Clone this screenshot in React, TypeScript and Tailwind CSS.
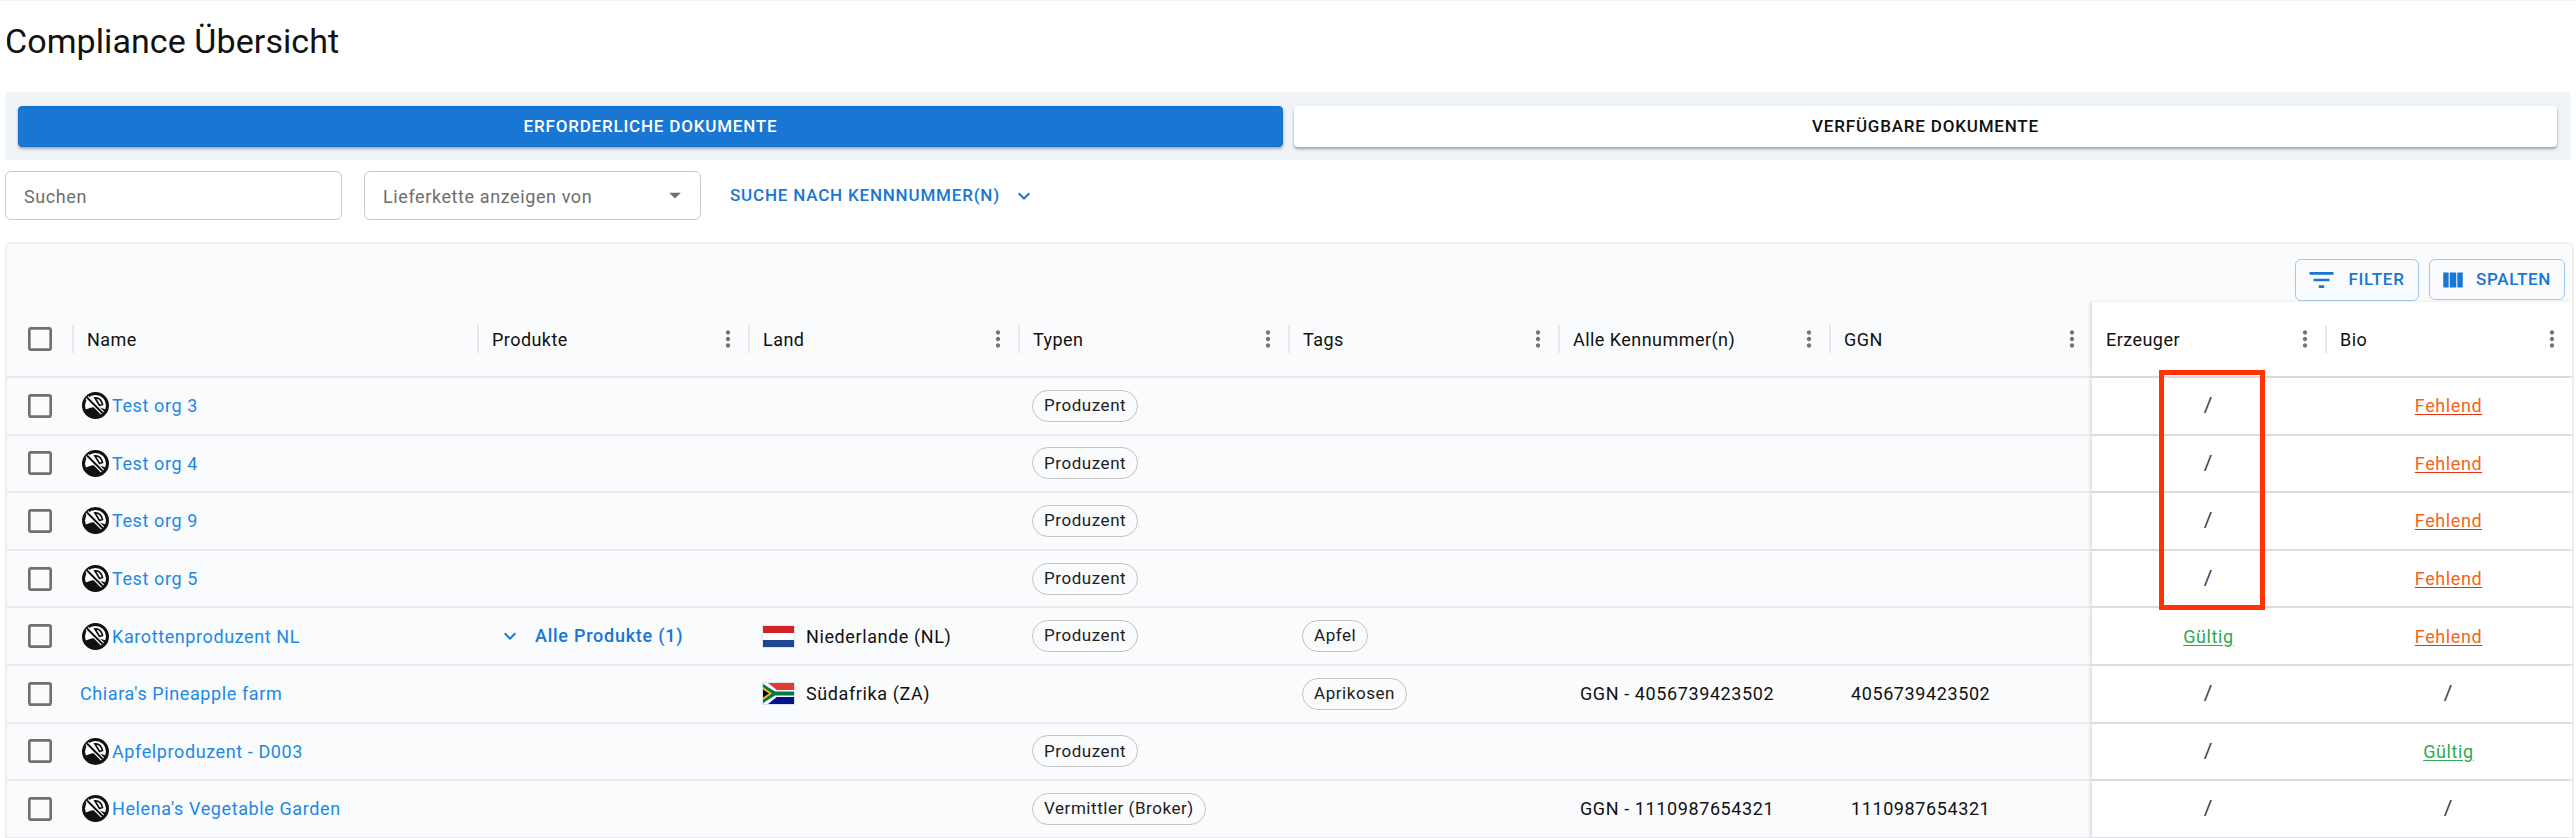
import React from "react";

function NoIcon() {
  return (
    <svg width="27" height="27" viewBox="0 0 27 27" className="shrink-0">
      <circle cx="13.5" cy="13.5" r="12" fill="#fff" stroke="#111" strokeWidth="3" />
      <path d="M3 17.5c3-.5 5-2 9.500-2.500s8 1.500 11.500 2.500c-1.500 4.500-5.500 8-10.500 8S4.500 22 3 17.500z" fill="#111" />
      <path d="M13 6c4-.5 7 2.500 7.500 6.500l-3 1z" fill="#fff" stroke="#111" strokeWidth="1.800" />
      <path d="M5 5.500L20.500 21" stroke="#fff" strokeWidth="4.500" />
      <path d="M5 5.500L20.500 21" stroke="#111" strokeWidth="2" />
    </svg>
  );
}

function Dots() {
  return (
    <svg width="26" height="26" viewBox="0 0 24 24" fill="#757575" className="shrink-0">
      <path d="M12 8c1.100 0 2-.9 2-2s-.9-2-2-2-2 .9-2 2 .9 2 2 2zm0 2c-1.100 0-2 .9-2 2s.9 2 2 2 2-.9 2-2-.9-2-2-2zm0 6c-1.100 0-2 .9-2 2s.9 2 2 2 2-.9 2-2-.9-2-2-2z" />
    </svg>
  );
}

function Check() {
  return (
    <svg width="32" height="32" viewBox="0 0 24 24" fill="#707070" className="shrink-0">
      <path d="M19 5v14H5V5h14m0-2H5c-1.100 0-2 .9-2 2v14c0 1.100.9 2 2 2h14c1.100 0 2-.9 2-2V5c0-1.100-.9-2-2-2z" />
    </svg>
  );
}

function Chevron() {
  return (
    <svg width="24" height="24" viewBox="0 0 24 24" fill="#1976d2" className="shrink-0">
      <path d="M7.410 8.590L12 13.170l4.590-4.580L18 10l-6 6-6-6z" />
    </svg>
  );
}

function FlagNL() {
  return (
    <svg width="33" height="23" viewBox="0 0 33 23" className="shrink-0">
      <rect x="0.500" y="0.500" width="32" height="22" fill="#fff" stroke="#dfe3ea" />
      <rect x="1" y="1" width="31" height="7" fill="#d0222b" />
      <rect x="1" y="15" width="31" height="7" fill="#1f4690" />
    </svg>
  );
}

function FlagZA() {
  return (
    <svg width="33" height="23" viewBox="0 0 33 23" className="shrink-0">
      <rect x="0.500" y="0.500" width="32" height="22" fill="#fff" stroke="#dfe3ea" />
      <rect x="1" y="1" width="31" height="7" fill="#e03c31" />
      <rect x="1" y="15" width="31" height="7" fill="#001489" />
      <path d="M1 1L13 11.500L1 22z" fill="#fff" />
      <path d="M1 1h5l10 8h16v5H16L6 22H1l11-10.500z" fill="#fff" />
      <path d="M1 2l12 7.500h19v4H13L1 21z" fill="#007749" />
      <path d="M1 5l9 6.500-9 6.500z" fill="#ffb81c" />
      <path d="M1 7.500l6 4-6 4z" fill="#000" />
    </svg>
  );
}

function Chip({ label }: { label: string }) {
  return (
    <span className="inline-flex h-[32px] items-center rounded-full border border-[#c4c4c4] px-[11px] text-[17px] tracking-[0.55px] text-[#212121]">
      {label}
    </span>
  );
}

function Link({ color, label }: { color: string; label: string }) {
  return <span className={`underline underline-offset-2 ${color}`}>{label}</span>;
}

const green = "text-[#2fa84f] decoration-[#2fa84f]";
const orange = "text-[#f2641c] decoration-[#e63312]";

type Row = {
  name: string;
  icon: boolean;
  products?: string;
  flag?: "nl" | "za";
  land?: string;
  chip?: string;
  tag?: string;
  ids?: string;
  ggn?: string;
  e: "/" | "G" | "F";
  b: "/" | "G" | "F";
};

const rows: Row[] = [
  { name: "Test org 3", icon: true, chip: "Produzent", e: "/", b: "F" },
  { name: "Test org 4", icon: true, chip: "Produzent", e: "/", b: "F" },
  { name: "Test org 9", icon: true, chip: "Produzent", e: "/", b: "F" },
  { name: "Test org 5", icon: true, chip: "Produzent", e: "/", b: "F" },
  { name: "Karottenproduzent NL", icon: true, products: "Alle Produkte (1)", flag: "nl", land: "Niederlande (NL)", chip: "Produzent", tag: "Apfel", e: "G", b: "F" },
  { name: "Chiara's Pineapple farm", icon: false, flag: "za", land: "Südafrika (ZA)", tag: "Aprikosen", ids: "GGN - 4056739423502", ggn: "4056739423502", e: "/", b: "/" },
  { name: "Apfelproduzent - D003", icon: true, chip: "Produzent", e: "/", b: "G" },
  { name: "Helena's Vegetable Garden", icon: true, chip: "Vermittler (Broker)", ids: "GGN - 1110987654321", ggn: "1110987654321", e: "/", b: "/" },
];

function Status({ v }: { v: "/" | "G" | "F" }) {
  if (v === "G") return <Link color={green} label="Gültig" />;
  if (v === "F") return <Link color={orange} label="Fehlend" />;
  return <span className="text-[21px] text-[#424242]">/</span>;
}

function Head({ w, label, dots = true, pl = "pl-[13px]" }: { w: string; label: string; dots?: boolean; pl?: string }) {
  return (
    <div className={`flex h-full items-center ${w}`}>
      <div className="h-[28px] w-[2px] shrink-0 bg-[#e6e8ec]" />
      <div className={`flex min-w-0 flex-1 items-center justify-between pr-[7px] font-[450] tracking-[0.45px] ${pl}`}>
        <span>{label}</span>
        {dots ? <Dots /> : null}
      </div>
    </div>
  );
}

export default function App() {
  return (
    <div className="h-[838px] w-[2576px] overflow-hidden bg-white font-['Roboto',sans-serif] text-[18px] tracking-[0.6px] text-[#111]">
      <div className="h-[1px] bg-[#f2f2f2]" />
      <h1 className="pl-[5px] pt-[19px] text-[34px] leading-[42px] tracking-[0.08px]">Compliance Übersicht</h1>

      <div className="mx-[5px] mt-[30px] flex h-[68px] gap-[11px] rounded bg-[#f1f4f7] pl-[13px] pr-[14px] pt-[14px]">
        <div className="flex h-[41px] flex-1 items-center justify-center rounded border border-[#1270cf] bg-[#1976d2] text-[17px] font-medium tracking-[0.8px] text-white shadow-[0_2px_3px_rgba(0,0,0,0.3)]">
          ERFORDERLICHE DOKUMENTE
        </div>
        <div className="flex h-[41px] flex-1 items-center justify-center rounded bg-white text-[17px] font-medium tracking-[0.8px] text-[#111] shadow-[0_2px_3px_rgba(0,0,0,0.35)]">
          VERFÜGBARE DOKUMENTE
        </div>
      </div>

      <div className="mt-[11px] flex items-center pl-[5px]">
        <div className="flex h-[49px] w-[337px] items-center rounded-[6px] border border-[#c9c9c9] px-[18px] pt-[1px] text-[#6e6e6e]">Suchen</div>
        <div className="ml-[22px] flex h-[49px] w-[337px] items-center justify-between rounded-[6px] border border-[#c9c9c9] pl-[18px] pr-[11px] pt-[1px] text-[#6e6e6e]">
          <span>Lieferkette anzeigen von</span>
          <svg width="28" height="28" viewBox="0 0 24 24" fill="#6f6f6f" className="-mt-[3px]">
            <path d="M7 10l5 5 5-5z" />
          </svg>
        </div>
        <div className="ml-[29px] flex items-center text-[17px] font-medium tracking-[0.8px] text-[#1976d2]">
          <span>SUCHE NACH KENNNUMMER(N)</span>
          <span className="ml-[12px]"><Chevron /></span>
        </div>
      </div>

      <div className="relative ml-[5px] mr-[2px] mt-[22px] h-[600px] rounded-t-[6px] border-x-2 border-t-2 border-[#eeeeee] bg-[#fafbfd]">
        <div className="flex h-[57px] items-start justify-end gap-[10px] pr-[7px] pt-[15px]">
          <div className="flex h-[42px] w-[124px] items-center justify-center gap-[14px] rounded-[6px] border border-[#a3c8ee] text-[17px] font-medium tracking-[0.7px] text-[#1976d2]">
            <svg width="25" height="32" viewBox="3 0 18 24" fill="#1976d2" className="shrink-0"><path d="M10 18h4v-2h-4v2zM3 6v2h18V6H3zm3 7h12v-2H6v2z" /></svg>
            FILTER
          </div>
          <div className="flex h-[41px] w-[136px] items-center justify-center gap-[13px] rounded-[6px] border border-[#a3c8ee] text-[17px] font-medium tracking-[0.7px] text-[#1976d2]">
            <svg width="20" height="26" viewBox="3 0 18 24" fill="#1976d2" className="shrink-0"><path d="M3 5h4.500c.3 0 .5.200.5.500v13c0 .3-.2.500-.5.500H4c-.6 0-1-.4-1-1V5zm6.500 0h5c.3 0 .5.200.5.500v13c0 .3-.2.500-.5.500h-5c-.3 0-.5-.2-.5-.500v-13c0-.3.200-.5.500-.5zm7 0H21v13c0 .6-.4 1-1 1h-3.500c-.3 0-.5-.2-.5-.500v-13c0-.3.200-.5.500-.5z" /></svg>
            SPALTEN
          </div>
        </div>

        <div className="flex h-[77px] items-center border-b-2 border-[#e8e9ec] pt-[1px]">
          <div className="flex h-full w-[65px] shrink-0 items-center pl-[17px]"><Check /></div>
          <Head w="w-[405px] shrink-0" label="Name" dots={false} />
          <Head w="w-[271px] shrink-0" label="Produkte" />
          <Head w="w-[270px] shrink-0" label="Land" />
          <Head w="w-[270px] shrink-0" label="Typen" />
          <Head w="w-[270px] shrink-0" label="Tags" />
          <Head w="w-[271px] shrink-0" label="Alle Kennummer(n)" />
          <Head w="w-[263px] shrink-0" label="GGN" />
          <div className="flex h-full flex-1 items-center bg-white shadow-[-2px_0_3px_rgba(0,0,0,0.12)]">
            <div className="flex h-full w-[233px] shrink-0 items-center justify-between pl-[14px] pr-[7px] font-[450] tracking-[0.45px]">
              <span>Erzeuger</span><Dots />
            </div>
            <Head w="flex-1" label="Bio" />
          </div>
        </div>

        {rows.map((r) => (
          <div key={r.name} className="flex h-[57.6px] items-center border-b-2 border-[#ebecef]">
            <div className="flex h-full w-[65px] shrink-0 items-center pl-[17px]"><Check /></div>
            <div className="flex w-[405px] shrink-0 items-center text-[#1e88e5]">
              {r.icon ? (
                <div className="ml-[10px] flex items-center gap-[3px]"><NoIcon /><span>{r.name}</span></div>
              ) : (
                <span className="ml-[8px]">{r.name}</span>
              )}
            </div>
            <div className="flex w-[271px] shrink-0 items-center pl-[21px] font-medium tracking-[0.75px] text-[#1976d2]">
              {r.products ? (
                <>
                  <Chevron />
                  <span className="ml-[13px] -mt-[2px]">{r.products}</span>
                </>
              ) : null}
            </div>
            <div className="flex w-[270px] shrink-0 items-center gap-[11px] pl-[14px]">
              {r.flag === "nl" ? <FlagNL /> : null}
              {r.flag === "za" ? <FlagZA /> : null}
              {r.land ? <span>{r.land}</span> : null}
            </div>
            <div className="w-[270px] shrink-0 pl-[14px]">{r.chip ? <Chip label={r.chip} /> : null}</div>
            <div className="w-[270px] shrink-0 pl-[14px]">{r.tag ? <Chip label={r.tag} /> : null}</div>
            <div className="w-[271px] shrink-0 pl-[22px]">{r.ids}</div>
            <div className="w-[263px] shrink-0 pl-[22px]">{r.ggn}</div>
            <div className="flex h-full flex-1 items-center bg-white shadow-[-2px_0_3px_rgba(0,0,0,0.12)]">
              <div className="w-[233px] shrink-0 text-center"><Status v={r.e} /></div>
              <div className="flex-1 text-center"><Status v={r.b} /></div>
            </div>
          </div>
        ))}

        <div className="pointer-events-none absolute left-[2152px] top-[126px] h-[240px] w-[106px] border-[5px] border-[#ff3300]" />
      </div>
    </div>
  );
}
